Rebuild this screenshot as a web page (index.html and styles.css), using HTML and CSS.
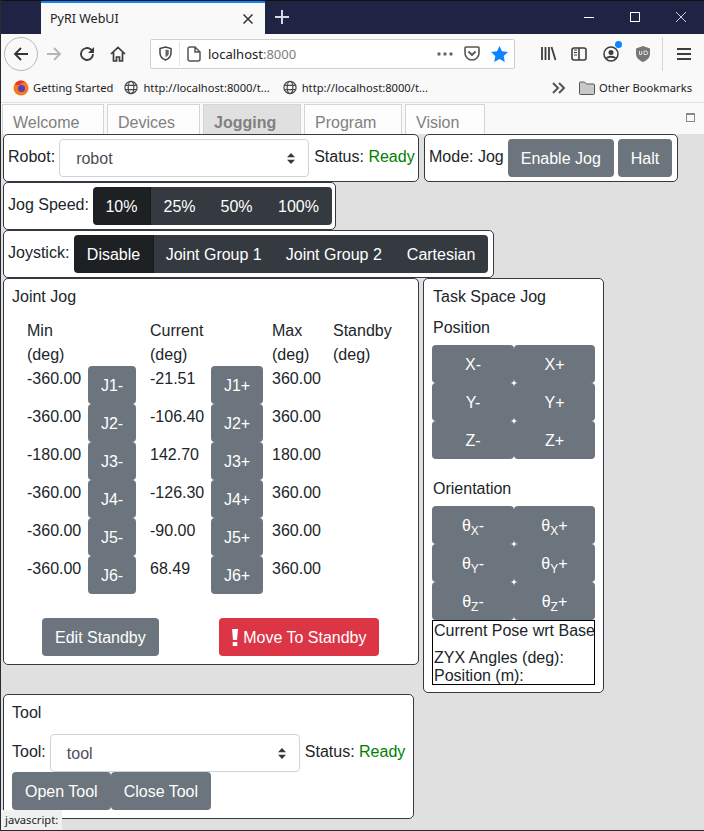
FILE: index.html
```html
<!DOCTYPE html>
<html lang="en">
<head>
    <meta charset="UTF-8">
    <title>PyRI WebUI</title>
    <link rel="stylesheet" href="styles.css">
</head>
<body>
    <div class="titlebar">
        <div class="browser-tab">
            <span>PyRI WebUI</span>
            <svg class="tab-close" width="10" height="10" viewBox="0 0 10 10"><path d="M.5.5l9 9M9.500.5l-9 9" stroke="#333" stroke-width="1.500"/></svg>
        </div>
        <svg class="new-tab" width="14" height="14" viewBox="0 0 14 14"><path d="M7 0v14M0 7h14" stroke="#d8d9e2" stroke-width="2"/></svg>
        <div class="win-buttons">
            <svg width="10" height="10" viewBox="0 0 10 10"><path d="M0 5.500h10" stroke="#fff"/></svg>
            <svg width="10" height="10" viewBox="0 0 10 10"><rect x=".5" y=".5" width="9" height="9" fill="none" stroke="#fff"/></svg>
            <svg width="10" height="10" viewBox="0 0 10 10"><path d="M0 0l10 10M10 0L0 10" stroke="#fff" stroke-width=".8"/></svg>
        </div>
    </div>

    <div class="toolbar">
        <div class="back-btn">
            <svg width="16" height="16" viewBox="0 0 16 16"><path d="M15 8H2M8 2L2 8l6 6" fill="none" stroke="#333" stroke-width="1.800"/></svg>
        </div>
        <svg class="tool-icon forward" width="16" height="16" viewBox="0 0 16 16"><path d="M1 8h13M8 2l6 6-6 6" fill="none" stroke="#b5b5b5" stroke-width="1.800"/></svg>
        <svg class="tool-icon reload" width="16" height="16" viewBox="0 0 16 16"><path d="M14 8a6 6 0 1 1-2-4.500L14.500 6" fill="none" stroke="#3c3c3c" stroke-width="1.900"/><path d="M15 1v6H9z" fill="#3c3c3c"/></svg>
        <svg class="tool-icon home" width="16" height="16" viewBox="0 0 16 16"><path d="M1 8l7-6.500L15 8M3.500 6.500V15h3v-4h3v4h3V6.500" fill="none" stroke="#3c3c3c" stroke-width="1.700"/></svg>
        <div class="urlbar">
            <svg width="13" height="15" viewBox="0 0 13 15"><path d="M1 2.500L6.500 1 12 2.500V7c0 3.500-2.500 5.800-5.500 7C3.500 12.800 1 10.500 1 7z" fill="none" stroke="#444" stroke-width="1.500"/><path d="M6.500 3.500L9.800 4.300V7c0 2-1.500 3.500-3.300 4.300z" fill="#666"/></svg>
            <span class="url-sep"></span>
            <svg width="14" height="16" viewBox="0 0 14 16"><path d="M1 3a2 2 0 0 1 2-2h5l5 5v7a2 2 0 0 1-2 2H3a2 2 0 0 1-2-2z M8 1v5h5" fill="none" stroke="#555" stroke-width="1.500"/></svg>
            <span class="url-text">localhost<span class="url-port">:8000</span></span>
            <svg class="url-dots" width="16" height="4" viewBox="0 0 16 4"><circle cx="2" cy="2" r="1.700" fill="#666"/><circle cx="8" cy="2" r="1.700" fill="#666"/><circle cx="14" cy="2" r="1.700" fill="#666"/></svg>
            <svg class="pocket" width="16" height="15" viewBox="0 0 16 15"><path d="M1 2a1 1 0 0 1 1-1h12a1 1 0 0 1 1 1v5a7 7 0 0 1-14 0z" fill="none" stroke="#555" stroke-width="1.600"/><path d="M4.500 5.500L8 9l3.500-3.500" fill="none" stroke="#555" stroke-width="1.800"/></svg>
            <svg class="star" width="17" height="16" viewBox="0 0 17 16"><path d="M8.500 0l2.500 5.300 6 .8-4.300 4 1.100 5.900-5.300-2.900L3.200 16l1.100-5.900L0 6.100l6-.8z" fill="#0a84ff"/></svg>
        </div>
        <svg class="tool-icon library" width="16" height="15" viewBox="0 0 16 15"><path d="M1 1v13M4.500 1v13M8 1v13M10.500 1l4 13" fill="none" stroke="#3c3c3c" stroke-width="1.800"/></svg>
        <svg class="tool-icon sidebar" width="16" height="14" viewBox="0 0 16 14"><rect x="1" y="1" width="14" height="12" rx="2" fill="none" stroke="#3c3c3c" stroke-width="1.600"/><path d="M8 1v12" stroke="#3c3c3c" stroke-width="1.600"/><path d="M3 3h3M3 5.500h3M3 8h3" stroke="#3c3c3c"/></svg>
        <div class="account">
            <svg class="tool-icon" width="16" height="16" viewBox="0 0 16 16"><circle cx="8" cy="8" r="7" fill="none" stroke="#3c3c3c" stroke-width="1.500"/><circle cx="8" cy="6.500" r="2.500" fill="#3c3c3c"/><path d="M3.500 12.500c1-2.500 8-2.500 9 0" fill="none" stroke="#3c3c3c" stroke-width="2"/></svg>
            <span class="account-dot"></span>
        </div>
        <svg class="tool-icon ublock" width="14" height="16" viewBox="0 0 14 16"><path d="M0 2.500L7 0l7 2.500V8c0 4-3.500 6.500-7 8-3.500-1.500-7-4-7-8z" fill="#777"/><path d="M3.500 5v3.500h2.200V5M8 5h2a1.200 1.200 0 0 1 0 3.500H8z" fill="none" stroke="#ddd"/></svg>
        <span class="tool-sep"></span>
        <svg class="menu-icon" width="14" height="12" viewBox="0 0 14 12"><path d="M0 1h14M0 6h14M0 11h14" stroke="#3c3c3c" stroke-width="1.800"/></svg>
    </div>

    <div class="bookmarks">
        <div class="bookmark first">
            <svg width="16" height="16" viewBox="0 0 16 16"><circle cx="8" cy="8" r="7.500" fill="#f47a1c"/><circle cx="8.500" cy="8.500" r="3.500" fill="#5b3bc4"/><path d="M2 4c2-4 8-5 11-1-3-1-5 0-6 2-2 0-4 0-5-1z" fill="#e8352e"/></svg>
            <span>Getting Started</span>
        </div>
        <div class="bookmark">
            <svg width="14" height="15" viewBox="0 0 15 15"><g fill="none" stroke="#4a4a4a" stroke-width="1.300"><circle cx="7.500" cy="7.500" r="6.500"/><ellipse cx="7.500" cy="7.500" rx="3" ry="6.500"/><path d="M1 5.300h13M1 9.700h13"/></g></svg>
            <span>http://localhost:8000/t...</span>
        </div>
        <div class="bookmark">
            <svg width="14" height="15" viewBox="0 0 15 15"><g fill="none" stroke="#4a4a4a" stroke-width="1.300"><circle cx="7.500" cy="7.500" r="6.500"/><ellipse cx="7.500" cy="7.500" rx="3" ry="6.500"/><path d="M1 5.300h13M1 9.700h13"/></g></svg>
            <span>http://localhost:8000/t...</span>
        </div>
        <svg class="chevrons" width="13" height="12" viewBox="0 0 13 12"><path d="M1 1l5 5-5 5M7 1l5 5-5 5" fill="none" stroke="#555" stroke-width="2"/></svg>
        <div class="bookmark other">
            <svg width="16" height="14" viewBox="0 0 16 14"><path d="M.5 2a1 1 0 0 1 1-1h4l2 2h7a1 1 0 0 1 1 1v8.500a1 1 0 0 1-1 1h-13a1 1 0 0 1-1-1z" fill="#c8c8c8" stroke="#555"/></svg>
            <span>Other Bookmarks</span>
        </div>
    </div>

    <div class="page">
        <div class="page-tabs">
            <div class="page-tab">Welcome</div>
            <div class="page-tab">Devices</div>
            <div class="page-tab active">Jogging</div>
            <div class="page-tab">Program</div>
            <div class="page-tab">Vision</div>
            <span class="maximize"></span>
        </div>

        <div class="content">
            <div class="panel-row">
                <div class="panel robot-panel">
                    <label>Robot:</label>
                    <div class="select">robot<svg width="8" height="11" viewBox="0 0 8 11"><path d="M4 0l4 4.300H0zM4 11L0 6.700h8z" fill="#343a40"/></svg></div>
                    <span class="status">Status: <span class="ready">Ready</span></span>
                </div>
                <div class="panel mode-panel">
                    <label>Mode: Jog</label>
                    <button class="btn">Enable Jog</button>
                    <button class="btn">Halt</button>
                </div>
            </div>
            <div class="panel-row">
                <div class="panel speed-panel">
                    <label>Jog Speed:</label>
                    <div class="btn-group">
                        <button class="dark on">10%</button>
                        <button class="dark">25%</button>
                        <button class="dark">50%</button>
                        <button class="dark">100%</button>
                    </div>
                </div>
            </div>
            <div class="panel-row">
                <div class="panel joystick-panel">
                    <label>Joystick:</label>
                    <div class="btn-group">
                        <button class="dark on">Disable</button>
                        <button class="dark">Joint Group 1</button>
                        <button class="dark">Joint Group 2</button>
                        <button class="dark">Cartesian</button>
                    </div>
                </div>
            </div>

            <div class="jog-row">
                <div class="panel joint-panel">
                    <div class="panel-title">Joint Jog</div>
                    <div class="joint-grid">
                        <div>Min<br>(deg)</div><div></div>
                        <div>Current<br>(deg)</div><div></div>
                        <div>Max<br>(deg)</div>
                        <div>Standby<br>(deg)</div>

                        <div>-360.00</div><button class="btn joint">J1-</button><div>-21.51</div><button class="btn joint">J1+</button><div>360.00</div><div></div>
                        <div>-360.00</div><button class="btn joint">J2-</button><div>-106.40</div><button class="btn joint">J2+</button><div>360.00</div><div></div>
                        <div>-180.00</div><button class="btn joint">J3-</button><div>142.70</div><button class="btn joint">J3+</button><div>180.00</div><div></div>
                        <div>-360.00</div><button class="btn joint">J4-</button><div>-126.30</div><button class="btn joint">J4+</button><div>360.00</div><div></div>
                        <div>-360.00</div><button class="btn joint">J5-</button><div>-90.00</div><button class="btn joint">J5+</button><div>360.00</div><div></div>
                        <div>-360.00</div><button class="btn joint">J6-</button><div>68.49</div><button class="btn joint">J6+</button><div>360.00</div><div></div>
                    </div>
                    <div class="standby-row">
                        <button class="btn">Edit Standby</button>
                        <button class="btn danger"><svg width="6" height="17" viewBox="0 0 6 17"><path d="M0 0h6L5 11H1zM.7 13h4.600v4H.7z" fill="#fff"/></svg> Move To Standby</button>
                    </div>
                </div>

                <div class="panel task-panel">
                    <div class="panel-title">Task Space Jog</div>
                    <div class="panel-title position">Position</div>
                    <div class="task-grid">
                        <button class="btn">X-</button><button class="btn">X+</button>
                        <button class="btn">Y-</button><button class="btn">Y+</button>
                        <button class="btn">Z-</button><button class="btn">Z+</button>
                    </div>
                    <div class="panel-title orientation">Orientation</div>
                    <div class="task-grid">
                        <button class="btn">θ<sub>X</sub>-</button><button class="btn">θ<sub>X</sub>+</button>
                        <button class="btn">θ<sub>Y</sub>-</button><button class="btn">θ<sub>Y</sub>+</button>
                        <button class="btn">θ<sub>Z</sub>-</button><button class="btn">θ<sub>Z</sub>+</button>
                    </div>
                    <div class="pose-box">
                        <div class="pose-title">Current Pose wrt Base</div>
                        <div>ZYX Angles (deg):</div>
                        <div>Position (m):</div>
                    </div>
                </div>
            </div>

            <div class="panel tool-panel">
                <div class="panel-title">Tool</div>
                <div class="tool-row">
                    <label>Tool:</label>
                    <div class="select">tool<svg width="8" height="11" viewBox="0 0 8 11"><path d="M4 0l4 4.300H0zM4 11L0 6.700h8z" fill="#343a40"/></svg></div>
                    <span class="status">Status: <span class="ready">Ready</span></span>
                </div>
                <div class="tool-buttons">
                    <button class="btn">Open Tool</button><button class="btn">Close Tool</button>
                </div>
            </div>
        </div>

        <div class="status-tip">javascript:</div>
    </div>
</body>
</html>
```

FILE: styles.css
```css
* {
    box-sizing: border-box;
}
body {
    margin: 0;
    width: 704px;
    height: 831px;
    overflow: hidden;
    display: flex;
    flex-direction: column;
    font-family: "Liberation Sans", Arial, sans-serif;
    font-size: 16px;
    line-height: 24px;
    color: #212529;
    background-color: #e0e0e0;
    border-left: 1px solid #2a2a33;
    border-bottom: 1px solid #2a2a33;
}

/* browser chrome */
.titlebar {
    height: 34px;
    flex: none;
    display: flex;
    align-items: flex-end;
    padding-left: 40px;
    background-color: #1f2344;
    border-top: 1px solid #111;
}
.browser-tab {
    width: 224px;
    height: 33px;
    display: flex;
    align-items: center;
    justify-content: space-between;
    padding: 0 12px 0 9px;
    font-family: "Noto Sans", sans-serif;
    font-size: 12.5px;
    color: #222;
    background-color: #f9f9fa;
    border-top: 2px solid #0a84ff;
}
.new-tab {
    margin: 0 0 10px 10px;
}
.win-buttons {
    margin-left: auto;
    display: flex;
    gap: 36px;
    padding: 0 18px 12px 0;
}
.toolbar {
    height: 39px;
    flex: none;
    display: flex;
    align-items: center;
    padding-left: 3px;
    background-color: #f9f9fa;
}
.back-btn {
    width: 34px;
    height: 34px;
    display: flex;
    align-items: center;
    justify-content: center;
    border: 1px solid #b8b8b8;
    border-radius: 50%;
}
.tool-icon {
    flex: none;
}
.forward {
    margin-left: 8px;
}
.reload {
    margin-left: 17px;
}
.home {
    margin-left: 15px;
}
.urlbar {
    width: 365px;
    height: 30px;
    margin-left: 24px;
    display: flex;
    align-items: center;
    gap: 7px;
    padding: 0 6px 0 8px;
    background-color: #fff;
    border: 1px solid #cfcfd2;
    border-radius: 2px;
}
.url-sep {
    width: 1px;
    height: 24px;
    background-color: #e3e3e5;
}
.url-text {
    font-family: "Noto Sans", sans-serif;
    font-size: 13px;
    color: #222;
}
.url-port {
    color: #808080;
}
.url-dots {
    margin-left: auto;
    margin-right: 4px;
}
.star {
    margin-left: 4px;
}
.library {
    margin-left: 26px;
}
.sidebar {
    margin-left: 14px;
}
.account {
    position: relative;
    display: flex;
    margin-left: 16px;
}
.account-dot {
    position: absolute;
    top: -5px;
    right: -3px;
    width: 7px;
    height: 7px;
    background-color: #0a84ff;
    border-radius: 50%;
}
.ublock {
    margin-left: 17px;
}
.tool-sep {
    width: 1px;
    height: 34px;
    margin-left: 12px;
    background-color: #d6d6d8;
}
.menu-icon {
    margin-left: 14px;
}
.bookmarks {
    height: 30px;
    flex: none;
    display: flex;
    align-items: center;
    padding-left: 12px;
    font-family: "Noto Sans", sans-serif;
    font-size: 11.2px;
    color: #222;
    background-color: #f9f9fa;
    border-bottom: 1px solid #e0e0e2;
}
.bookmark {
    display: flex;
    align-items: center;
    gap: 5px;
    margin-right: 13px;
}
.bookmark.first {
    gap: 4px;
    margin-right: 11px;
}
.chevrons {
    margin-left: auto;
    margin-right: 14px;
}
.bookmark.other {
    gap: 4px;
    margin-right: 12px;
}

/* page */
.page {
    position: relative;
    flex: 1;
    min-height: 0;
    padding-left: 2px;
}
.page-tabs {
    height: 31px;
    display: flex;
    gap: 3px;
    margin-left: -2px;
    padding: 1px 0 0 1px;
    overflow: hidden;
    background-color: #f9f9fa;
}
.page-tab {
    height: 30px;
    padding: 6px 0 0 10px;
    color: #808080;
    border: 1px solid #d5d5d5;
    border-bottom: none;
    background-color: #fdfdfd;
}
.page-tab:nth-child(1) { width: 102px; }
.page-tab:nth-child(2) { width: 93px; }
.page-tab:nth-child(3) { width: 98px; }
.page-tab:nth-child(4) { width: 98px; }
.page-tab:nth-child(5) { width: 80px; }
.page-tab.active {
    font-weight: bold;
    background-color: #e0e0e0;
}
.maximize {
    position: absolute;
    top: 10px;
    right: 9px;
    width: 9px;
    height: 9px;
    border: 1px solid #888;
    border-top-width: 2px;
}
.panel {
    background-color: #fff;
    border: 1px solid #343a40;
    border-radius: 5px;
}
.panel-row {
    display: flex;
    gap: 5px;
}
.robot-panel, .mode-panel, .speed-panel, .joystick-panel {
    height: 48px;
    display: flex;
    align-items: flex-start;
    padding: 4px;
}
.robot-panel {
    width: 416px;
}
.mode-panel {
    width: 254px;
    gap: 4px;
}
.speed-panel {
    width: 333px;
}
.joystick-panel {
    width: 491px;
}
label {
    padding-top: 6px;
    white-space: nowrap;
}
.status {
    padding: 6px 0 0 5px;
    white-space: nowrap;
}
.ready {
    color: #008000;
}
.select {
    width: 250px;
    height: 38px;
    flex: none;
    margin-left: 4px;
    display: flex;
    align-items: center;
    justify-content: space-between;
    color: #495057;
    background-color: #fff;
    border: 1px solid #ced4da;
    border-radius: 4px;
    padding: 1px 13px 0 16px;
}
.btn, .dark {
    height: 38px;
    font-family: inherit;
    font-size: 16px;
    color: #fff;
    white-space: nowrap;
    cursor: pointer;
}
.btn {
    padding: 1px 12px 0;
    background-color: #6c757d;
    border: 1px solid transparent;
    border-radius: 4px;
}
.btn.danger {
    padding: 1px 11px 0 12px;
    background-color: #dc3545;
}
.btn-group {
    display: flex;
    flex: none;
    margin-left: 5px;
    border-radius: 4px;
    overflow: hidden;
}
.speed-panel .btn-group {
    margin-left: 4px;
}
.dark {
    padding: 1px 12.5px 0;
    background-color: #343a40;
    border: none;
}
.joystick-panel .dark {
    padding: 1px 12px 0;
}
.dark.on, .joystick-panel .dark.on {
    padding: 1px 12.5px 0;
    background-color: #1d2124;
    border-right: 1px solid #171a1d;
}
.dark:last-child {
    padding: 1px 13px 0;
}

/* jogging */
.jog-row {
    display: flex;
    align-items: flex-start;
    gap: 4px;
}
.joint-panel {
    width: 416px;
    height: 387px;
    padding: 6px 8px;
}
.task-panel {
    width: 181px;
    height: 415px;
    padding: 6px 8px;
}
.panel-title {
    margin-bottom: 7px;
}
.task-panel .panel-title {
    padding-left: 1px;
}
.joint-grid {
    display: grid;
    grid-template-columns: 61px 62px 61px 61px 61px 61px;
    grid-template-rows: 48px;
    grid-auto-rows: 38px;
    margin-left: 15px;
    padding-top: 2px;
}
.joint-grid > div {
    padding-top: 1px;
}
.btn.joint {
    width: 48px;
    padding: 1px 0 0;
}
.joint-grid .btn.joint:nth-child(6n+4) {
    width: 52px;
}
.standby-row {
    display: flex;
    gap: 60px;
    margin: 24px 0 0 30px;
}
.danger svg {
    margin-right: 1px;
    vertical-align: -3px;
}
.task-grid {
    display: grid;
    grid-template-columns: 82px 81px;
    grid-auto-rows: 38px;
}
.task-grid .btn {
    width: 100%;
    padding: 1px 0 0;
}
.task-grid sub {
    font-size: 12px;
    line-height: 0;
}
.panel-title.position {
    margin-bottom: 5px;
}
.panel-title.orientation {
    margin: 18px 0 5px;
}
.pose-box {
    width: 163px;
    height: 65px;
    padding: 0 1px;
    line-height: 18px;
    white-space: nowrap;
    border: 1px solid #000;
}
.pose-title {
    margin-bottom: 8px;
    line-height: 20px;
}

/* tool */
.tool-panel {
    width: 411px;
    height: 125px;
    margin-top: 1px;
    padding: 6px 8px;
}
.tool-panel .panel-title {
    margin-bottom: 9px;
}
.tool-row {
    display: flex;
    align-items: flex-start;
}
.tool-buttons {
    display: flex;
}
.status-tip {
    position: absolute;
    left: 0;
    bottom: 0;
    height: 20px;
    padding: 0 4px;
    font-family: "Noto Sans", sans-serif;
    font-size: 11.2px;
    line-height: 20px;
    color: #222;
    background-color: #f0f0f0;
}
```
